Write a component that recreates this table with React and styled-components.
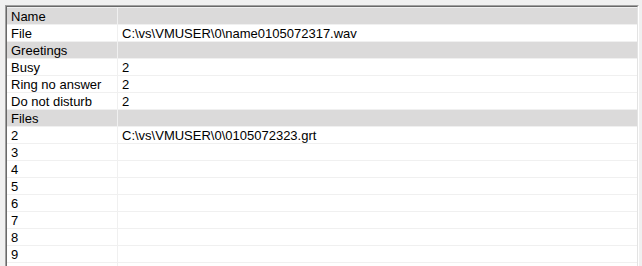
import React from "react";
import styled, { createGlobalStyle } from "styled-components";

const Global = createGlobalStyle`
  html, body {
    margin: 0;
    padding: 0;
    background: #f0f0f0;
  }
  body {
    font-family: "Liberation Sans", Arial, sans-serif;
  }
`;

const Page = styled.div`
  width: 642px;
  height: 266px;
  overflow: hidden;
  padding: 5px 0 0 5px;
  box-sizing: border-box;
`;

const Frame = styled.div`
  width: 634px;
  height: 280px;
  box-sizing: border-box;
  border-top: 1px solid #a0a0a0;
  border-left: 1px solid #a0a0a0;
  border-right: 1px solid #ffffff;
  border-bottom: 1px solid #ffffff;
`;

const Inner = styled.div`
  height: 100%;
  box-sizing: border-box;
  border-top: 1px solid #696969;
  border-left: 1px solid #696969;
  border-right: 1px solid #e3e3e3;
  border-bottom: 1px solid #e3e3e3;
  background: #ffffff;
  overflow: hidden;
`;

const Row = styled.div`
  display: grid;
  grid-template-columns: 111px 1fr;
  height: 17px;
  box-sizing: border-box;
  border-top: 1px solid #f0f0f0;
  background: ${({ $header }) => ($header ? "#dbdada" : "#ffffff")};
  font-size: 13px;
  line-height: 15px;
  color: #000;
`;

const Cell = styled.div`
  padding: 1px 0 0 4px;
  white-space: nowrap;
  overflow: hidden;
  border-right: ${({ $first }) => ($first ? "1px solid #f0f0f0" : "none")};
`;

const rows = [
  { name: "Name", header: true },
  { name: "File", value: "C:\\vs\\VMUSER\\0\\name0105072317.wav" },
  { name: "Greetings", header: true },
  { name: "Busy", value: "2" },
  { name: "Ring no answer", value: "2" },
  { name: "Do not disturb", value: "2" },
  { name: "Files", header: true },
  { name: "2", value: "C:\\vs\\VMUSER\\0\\0105072323.grt" },
  { name: "3" },
  { name: "4" },
  { name: "5" },
  { name: "6" },
  { name: "7" },
  { name: "8" },
  { name: "9" },
  { name: "" },
];

export default function App() {
  return (
    <Page>
      <Global />
      <Frame>
        <Inner>
          {rows.map((r, i) => (
            <Row key={i} $header={r.header}>
              <Cell $first>{r.name}</Cell>
              <Cell>{r.value}</Cell>
            </Row>
          ))}
        </Inner>
      </Frame>
    </Page>
  );
}
